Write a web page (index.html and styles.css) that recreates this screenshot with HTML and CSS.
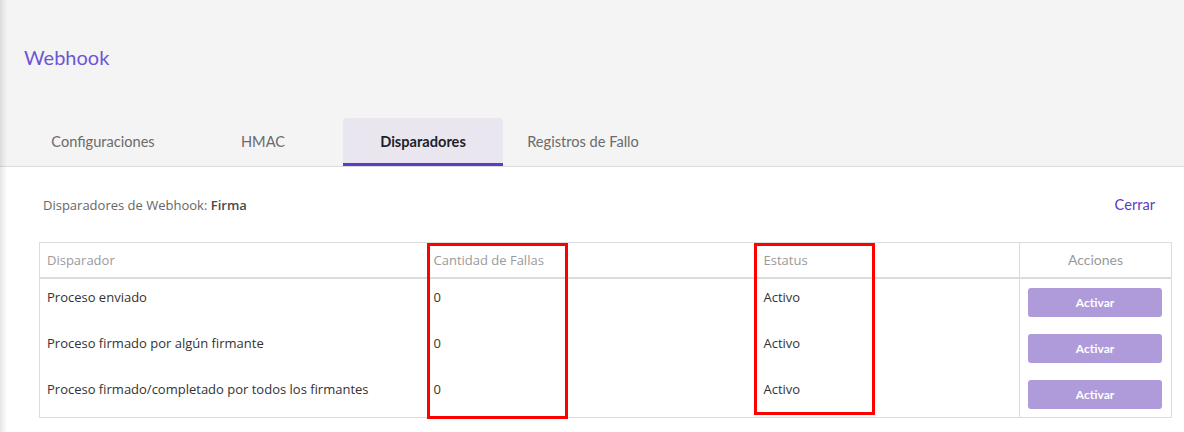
FILE: index.html
```html
<!DOCTYPE html>
<html lang="es">
<head>
<meta charset="utf-8">
<title>Webhook</title>
<link rel="stylesheet" href="styles.css">
</head>
<body>
<div class="app">
  <header class="top">
    <h1 class="title">Webhook</h1>
    <nav class="tabs">
      <a class="tab">Configuraciones</a>
      <a class="tab">HMAC</a>
      <a class="tab active">Disparadores</a>
      <a class="tab">Registros de Fallo</a>
    </nav>
  </header>
  <section class="content">
    <div class="bar">
      <p class="subtitle">Disparadores de Webhook: <b>Firma</b></p>
      <a class="close">Cerrar</a>
    </div>
    <div class="table-wrap">
      <table class="grid">
        <colgroup>
          <col class="c1"><col class="c2"><col class="c3"><col class="c4">
        </colgroup>
        <thead>
          <tr><th>Disparador</th><th>Cantidad de Fallas</th><th>Estatus</th><th class="act">Acciones</th></tr>
        </thead>
        <tbody>
          <tr><td>Proceso enviado</td><td>0</td><td>Activo</td><td class="act"><button class="btn">Activar</button></td></tr>
          <tr><td>Proceso firmado por algún firmante</td><td>0</td><td>Activo</td><td class="act"><button class="btn">Activar</button></td></tr>
          <tr><td>Proceso firmado/completado por todos los firmantes</td><td>0</td><td>Activo</td><td class="act"><button class="btn">Activar</button></td></tr>
        </tbody>
      </table>
      <div class="mark mark-fallas"></div>
      <div class="mark mark-estatus"></div>
    </div>
  </section>
</div>
</body>
</html>
```

FILE: styles.css
```css
* { box-sizing: border-box; }
html, body { margin: 0; padding: 0; background: #fff; }
body { font-family: "Open Sans", "Noto Sans", sans-serif; }

.app { position: relative; width: 1184px; height: 432px; overflow: hidden; }
.app::before {
  content: ""; position: absolute; left: 0; top: 0; bottom: 0; width: 7px;
  background: linear-gradient(to right, rgba(0,0,0,0.10), rgba(0,0,0,0));
  z-index: 5;
}

.top {
  background: #f4f4f4;
  border-bottom: 1px solid #dcdcdc;
  padding-top: 43px;
}
.title {
  margin: 0 0 47px 24px;
  font-family: Lato, sans-serif;
  font-weight: 400;
  font-size: 20px;
  line-height: 28px;
  color: #6c55d4;
}
.tabs { display: flex; padding-left: 23px; }
.tab {
  width: 160px;
  height: 48px;
  display: flex; align-items: center; justify-content: center;
  font-family: Lato, sans-serif;
  font-size: 14.6px;
  color: #6b6b6b;
  border-bottom: 3px solid transparent;
  padding-top: 1px;
}
.tab.active {
  background: #e9e6f0;
  border-bottom-color: #5b3cc4;
  border-radius: 4px 4px 0 0;
  color: #1f1f2a;
  font-weight: 700;
}

.content { padding: 0 13px 0 39px; }
.bar {
  display: flex; justify-content: space-between; align-items: center;
  height: 75px;
  padding: 0 16px 0 4px;
}
.subtitle { margin: 0; font-size: 13px; color: #666; }
.subtitle b { color: #4a4a4a; font-weight: 600; }
.close {
  font-family: Lato, sans-serif;
  font-size: 14.6px;
  color: #5b3cc4;
}

.table-wrap { position: relative; }
.grid {
  width: 1132px;
  table-layout: fixed;
  border-collapse: collapse;
  border: 1px solid #dcdcdc;
  font-size: 13px;
}
.c1 { width: 387px; }
.c2 { width: 330px; }
.c3 { width: 263px; }
.c4 { width: 152px; }
.grid th {
  text-align: left;
  font-weight: 400;
  color: #9a9a9a;
  padding: 8px 8px 8px 7px;
  line-height: 18px;
  border-bottom: 2px solid #dcdcdc;
}
.grid td {
  color: #333;
  padding: 8px 8px 8px 7px;
  line-height: 20px;
  vertical-align: top;
  height: 46px;
}
.grid .act { text-align: center; border-left: 1px solid #dcdcdc; padding-left: 8px; }
.grid th.act { font-family: Lato, sans-serif; font-size: 14px; }
.grid td.act { padding-top: 9px; padding-right: 9px; }
.btn {
  display: block;
  width: 100%;
  height: 29px;
  border: 0;
  border-radius: 3px;
  background: #af9bda;
  color: #fff;
  font-family: Lato, sans-serif;
  font-weight: 700;
  font-size: 12px;
}

.mark { position: absolute; border: 3px solid #ff0000; }
.mark-fallas { left: 388px; top: 1px; width: 141px; height: 176px; }
.mark-estatus { left: 715px; top: 1px; width: 121px; height: 172px; }
```
